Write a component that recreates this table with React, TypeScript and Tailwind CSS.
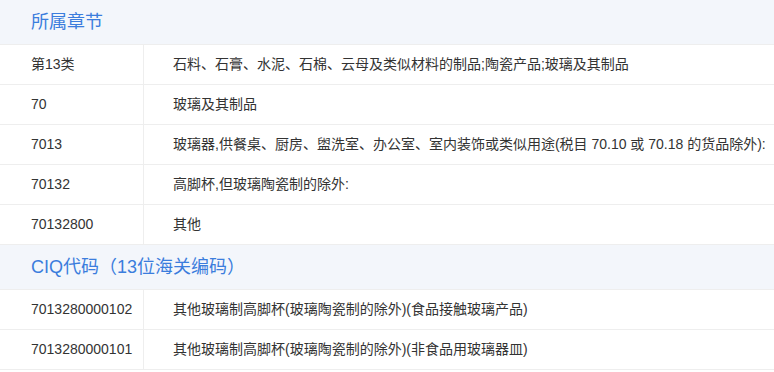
import React from "react";

const font = { fontFamily: '"Liberation Sans", "Noto Sans CJK SC", sans-serif' };

function Header({ title, tall }: { title: string; tall?: boolean }) {
  return (
    <div
      className={`flex items-center bg-[#f3f6fb] pl-[31px] text-[18px] text-[#3b7ddd] ${
        tall ? "h-[45px] border-t border-[#eeeeee]" : "h-[44px]"
      }`}
    >
      {title}
    </div>
  );
}

function Row({ code, desc }: { code: string; desc: string }) {
  return (
    <div className="flex h-[40px] border-t border-[#eeeeee] bg-white text-[14px] text-[#333333]">
      <div className="flex w-[144px] shrink-0 items-center border-r border-[#eeeeee] pl-[31px]">{code}</div>
      <div className="flex flex-1 items-center whitespace-nowrap pl-[29px]">{desc}</div>
    </div>
  );
}

export default function App() {
  return (
    <div className="w-[774px] h-[372px] overflow-hidden bg-white" style={font}>
      <Header title="所属章节" />
      <Row code="第13类" desc="石料、石膏、水泥、石棉、云母及类似材料的制品;陶瓷产品;玻璃及其制品" />
      <Row code="70" desc="玻璃及其制品" />
      <Row code="7013" desc="玻璃器,供餐桌、厨房、盥洗室、办公室、室内装饰或类似用途(税目 70.10 或 70.18 的货品除外):" />
      <Row code="70132" desc="高脚杯,但玻璃陶瓷制的除外:" />
      <Row code="70132800" desc="其他" />
      <Header title="CIQ代码（13位海关编码）" tall />
      <Row code="7013280000102" desc="其他玻璃制高脚杯(玻璃陶瓷制的除外)(食品接触玻璃产品)" />
      <div className="border-b border-[#eeeeee]">
        <Row code="7013280000101" desc="其他玻璃制高脚杯(玻璃陶瓷制的除外)(非食品用玻璃器皿)" />
      </div>
    </div>
  );
}
